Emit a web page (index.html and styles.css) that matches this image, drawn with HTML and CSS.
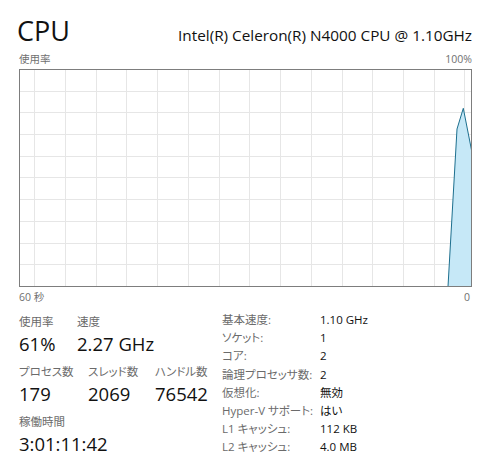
FILE: index.html
```html
<!DOCTYPE html>
<html lang="ja">
<head>
<meta charset="utf-8">
<title>CPU</title>
<link rel="stylesheet" href="styles.css">
</head>
<body>
<div class="page">
  <div class="header">
    <div class="title">CPU</div>
    <div class="model">Intel(R) Celeron(R) N4000 CPU @ 1.10GHz</div>
  </div>
  <div class="axis axis-top"><span>使用率</span><span>100%</span></div>
  <svg class="graph" width="453" height="218" viewBox="0 0 453 218">
    <g class="grid" shape-rendering="crispEdges">
      <line x1="15.5" y1="0" x2="15.5" y2="218"/>
      <line x1="46.5" y1="0" x2="46.5" y2="218"/>
      <line x1="77.5" y1="0" x2="77.5" y2="218"/>
      <line x1="107.5" y1="0" x2="107.5" y2="218"/>
      <line x1="138.5" y1="0" x2="138.5" y2="218"/>
      <line x1="169.5" y1="0" x2="169.5" y2="218"/>
      <line x1="200.5" y1="0" x2="200.5" y2="218"/>
      <line x1="230.5" y1="0" x2="230.5" y2="218"/>
      <line x1="261.5" y1="0" x2="261.5" y2="218"/>
      <line x1="292.5" y1="0" x2="292.5" y2="218"/>
      <line x1="323.5" y1="0" x2="323.5" y2="218"/>
      <line x1="353.5" y1="0" x2="353.5" y2="218"/>
      <line x1="384.5" y1="0" x2="384.5" y2="218"/>
      <line x1="415.5" y1="0" x2="415.5" y2="218"/>
      <line x1="445.5" y1="0" x2="445.5" y2="218"/>
      <line x1="0" y1="22.5" x2="453" y2="22.5"/>
      <line x1="0" y1="43.5" x2="453" y2="43.5"/>
      <line x1="0" y1="65.5" x2="453" y2="65.5"/>
      <line x1="0" y1="87.5" x2="453" y2="87.5"/>
      <line x1="0" y1="108.5" x2="453" y2="108.5"/>
      <line x1="0" y1="130.5" x2="453" y2="130.5"/>
      <line x1="0" y1="152.5" x2="453" y2="152.5"/>
      <line x1="0" y1="174.5" x2="453" y2="174.5"/>
      <line x1="0" y1="195.5" x2="453" y2="195.5"/>
    </g>
    <polygon class="area" points="429,217.5 438,60 444.3,39.3 452.5,81 452.5,217.5"/>
    <polyline class="line" points="429,217.5 438,60 444.3,39.3 452.5,81"/>
    <rect class="frame" x="0.5" y="0.5" width="452" height="217" shape-rendering="crispEdges"/>
  </svg>
  <div class="axis axis-bottom"><span>60 秒</span><span class="zero">0</span></div>

  <div class="stats">
    <div class="left">
      <div class="row">
        <div class="stat w58"><div class="label">使用率</div><div class="value">61%</div></div>
        <div class="stat"><div class="label">速度</div><div class="value">2.27 GHz</div></div>
      </div>
      <div class="row">
        <div class="stat w69"><div class="label">プロセス数</div><div class="value">179</div></div>
        <div class="stat w67"><div class="label">スレッド数</div><div class="value">2069</div></div>
        <div class="stat"><div class="label">ハンドル数</div><div class="value">76542</div></div>
      </div>
      <div class="row">
        <div class="stat"><div class="label">稼働時間</div><div class="value">3:01:11:42</div></div>
      </div>
    </div>
    <div class="right">
      <div class="kv"><span class="k">基本速度:</span><span class="v">1.10 GHz</span></div>
      <div class="kv"><span class="k">ソケット:</span><span class="v">1</span></div>
      <div class="kv"><span class="k">コア:</span><span class="v">2</span></div>
      <div class="kv"><span class="k">論理プロセッサ数:</span><span class="v">2</span></div>
      <div class="kv"><span class="k">仮想化:</span><span class="v">無効</span></div>
      <div class="kv"><span class="k">Hyper-V サポート:</span><span class="v">はい</span></div>
      <div class="kv"><span class="k">L1 キャッシュ:</span><span class="v">112 KB</span></div>
      <div class="kv"><span class="k">L2 キャッシュ:</span><span class="v">4.0 MB</span></div>
    </div>
  </div>
</div>
</body>
</html>
```

FILE: styles.css
```css
html, body {
  margin: 0;
  padding: 0;
  background: #ffffff;
}
body {
  font-family: "Open Sans", "Noto Sans CJK JP", sans-serif;
  font-feature-settings: "palt";
  color: #1a1a1a;
}
.page {
  width: 453px;
  padding: 0 22px 0 19px;
}
.header {
  display: flex;
  justify-content: space-between;
  align-items: baseline;
  height: 50px;
  padding-top: 14px;
  box-sizing: border-box;
}
.title {
  font-size: 27px;
  line-height: 34px;
  margin-left: -2px;
  color: #111;
}
.model {
  font-size: 15.3px;
  line-height: 20px;
  color: #111;
}
.axis {
  display: flex;
  justify-content: space-between;
  font-size: 10.5px;
  color: #707070;
}
.axis-top {
  height: 19px;
  line-height: 19px;
}
.axis-bottom {
  height: 20px;
  line-height: 20px;
}
.zero {
  margin-right: 2px;
}
.graph {
  display: block;
}
.grid line {
  stroke: #e6e6e6;
  stroke-width: 1;
}
.area {
  fill: #c6e8f7;
}
.line {
  fill: none;
  stroke: #1d6f8e;
  stroke-width: 1;
}
.frame {
  fill: none;
  stroke: #7d7d7d;
  stroke-width: 1;
}
.stats {
  display: flex;
  padding-top: 6px;
}
.left {
  width: 203px;
  display: flex;
  flex-direction: column;
}
.row {
  display: flex;
  margin-bottom: 6px;
}
.stat {
  display: flex;
  flex-direction: column;
}
.w58 { width: 58px; }
.w69 { width: 69px; }
.w67 { width: 67px; }
.label {
  font-size: 11.5px;
  line-height: 18px;
  color: #6b6b6b;
}
.value {
  font-size: 18.5px;
  line-height: 26px;
  color: #111;
}
.right {
  display: flex;
  flex-direction: column;
  margin-top: -2px;
}
.kv {
  display: flex;
  font-size: 11.5px;
  line-height: 18.2px;
}
.k {
  width: 98px;
  color: #6b6b6b;
}
.v {
  color: #111;
}
```
